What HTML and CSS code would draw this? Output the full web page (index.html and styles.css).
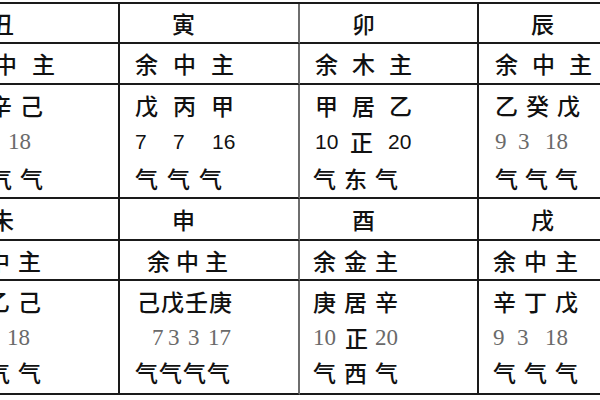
FILE: index.html
```html
<!DOCTYPE html>
<html lang="zh-CN">
<head>
<meta charset="utf-8">
<title>地支藏干表</title>
<link rel="stylesheet" href="styles.css">
</head>
<body>
<div class="sheet">
  <div class="c hd">丑</div>
  <div class="c hd mid">寅</div>
  <div class="c hd">卯</div>
  <div class="c hd">辰</div>

  <div class="c sub i17 t38">余中主</div>
  <div class="c sub mid i15 t38">余中主</div>
  <div class="c sub i15 t37">余木主</div>
  <div class="c sub i16 t37">余中主</div>

  <div class="c data">
    <div class="ln i19 t31">癸辛己</div>
    <div class="ln i19 sf"><span class="w23">9</span><span class="w27">3</span><span>18</span></div>
    <div class="ln i19 t31">气气气</div>
  </div>
  <div class="c data mid">
    <div class="ln i15 t38">戊丙甲</div>
    <div class="ln i15 sn"><span class="w38">7</span><span class="w39">7</span><span>16</span></div>
    <div class="ln i15 t32">气气气</div>
  </div>
  <div class="c data">
    <div class="ln i15 t37">甲居乙</div>
    <div class="ln i15 sn"><span class="w35">10</span><span class="w38 cj">正</span><span>20</span></div>
    <div class="ln i13 t31">气东气</div>
  </div>
  <div class="c data">
    <div class="ln i16 t31">乙癸戊</div>
    <div class="ln i16 sf"><span class="w23">9</span><span class="w27">3</span><span>18</span></div>
    <div class="ln i16 t30">气气气</div>
  </div>

  <div class="c hd">未</div>
  <div class="c hd mid">申</div>
  <div class="c hd">酉</div>
  <div class="c hd">戌</div>

  <div class="c sub i17 t31">余中主</div>
  <div class="c sub mid i27 t29">余中主</div>
  <div class="c sub i13 t31">余金主</div>
  <div class="c sub i14 t31">余中主</div>

  <div class="c data b2">
    <div class="ln i17 t31">丁乙己</div>
    <div class="ln i17 sf"><span class="w23">9</span><span class="w28">3</span><span>18</span></div>
    <div class="ln i17 t31">气气气</div>
  </div>
  <div class="c data b2 mid">
    <div class="ln i17 t24">己戊壬庚</div>
    <div class="ln i32 sf"><span class="w16">7</span><span class="w20">3</span><span class="w20">3</span><span>17</span></div>
    <div class="ln i15 t24">气气气气</div>
  </div>
  <div class="c data b2">
    <div class="ln i13 t31">庚居辛</div>
    <div class="ln i13 sf"><span class="w32">10</span><span class="w30 cj">正</span><span>20</span></div>
    <div class="ln i13 t31">气西气</div>
  </div>
  <div class="c data b2">
    <div class="ln i14 t31">辛丁戊</div>
    <div class="ln i14 sf"><span class="w24">9</span><span class="w28">3</span><span>18</span></div>
    <div class="ln i14 t31">气气气</div>
  </div>
</div>
</body>
</html>
```

FILE: styles.css
```css
html, body {
  margin: 0;
  padding: 0;
  background: #ffffff;
}

body {
  width: 600px;
  height: 400px;
  overflow: hidden;
  color: #111111;
  font-family: "Noto Sans CJK SC", "Noto Sans CJK TC", sans-serif;
  font-size: 23px;
  font-weight: 500;
}

.sheet {
  display: grid;
  grid-template-columns: 181px 180px 179px 180px;
  grid-template-rows: 40px 41px 114px 42px 40px 114px;
  width: max-content;
  margin: 2px 0 0 -61px;
  border-top: 2px solid #1a1a1a;
}

.c {
  box-sizing: border-box;
  border-right: 2px solid #1a1a1a;
  border-bottom: 2px solid #1a1a1a;
  white-space: nowrap;
  line-height: 1;
}

.c.mid {
  border-right-color: #6e6e6e;
}

.hd {
  display: flex;
  align-items: center;
  padding-left: 52px;
}

.sub {
  display: flex;
  align-items: center;
}

.data {
  display: flex;
  flex-direction: column;
  padding-top: 2px;
}

.ln {
  display: flex;
  align-items: center;
  height: 36.5px;
}

.data.b2 {
  padding-top: 3px;
}

.data.b2 .ln {
  height: 35.5px;
}

/* digits */
.sn {
  font-family: "Liberation Sans", Arial, sans-serif;
  font-size: 21px;
  font-weight: 400;
  color: #111111;
}

.sf {
  font-family: "Liberation Serif", "Times New Roman", serif;
  font-size: 23px;
  font-weight: 400;
  color: #6a6a6a;
}

.cj {
  font-family: "Noto Sans CJK SC", sans-serif;
  font-size: 23px;
  font-weight: 500;
  color: #111111;
}

.ln span {
  display: inline-block;
}

/* character pitch (font 23px) */
.t24 { letter-spacing: 1px; }
.t29 { letter-spacing: 6px; }
.t30 { letter-spacing: 7px; }
.t31 { letter-spacing: 8px; }
.t32 { letter-spacing: 9px; }
.t37 { letter-spacing: 14px; }
.t38 { letter-spacing: 15px; }

/* left indents */
.i13 { padding-left: 13px; }
.i14 { padding-left: 14px; }
.i15 { padding-left: 15px; }
.i16 { padding-left: 16px; }
.i17 { padding-left: 17px; }
.i19 { padding-left: 19px; }
.i27 { padding-left: 27px; }
.i32 { padding-left: 32px; }

/* number slot widths */
.w16 { width: 16px; }
.w20 { width: 20px; }
.w23 { width: 23px; }
.w24 { width: 24px; }
.w27 { width: 27px; }
.w28 { width: 28px; }
.w30 { width: 30px; }
.w32 { width: 32px; }
.w35 { width: 35px; }
.w38 { width: 38px; }
.w39 { width: 39px; }
```
